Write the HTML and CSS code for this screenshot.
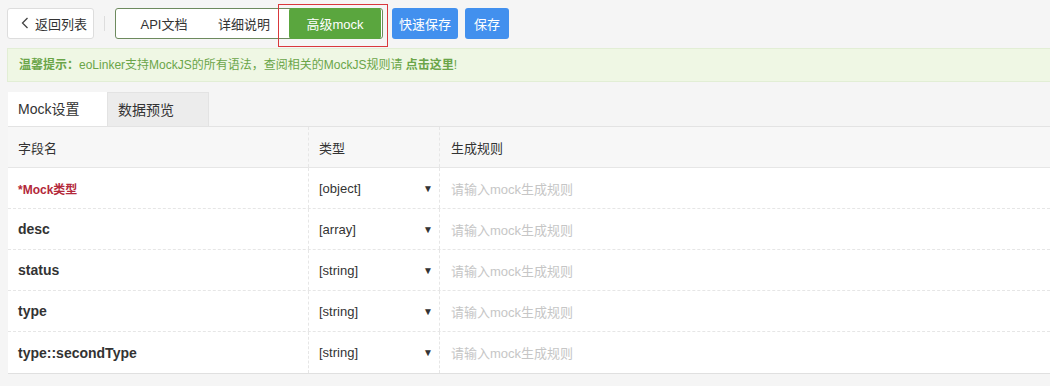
FILE: index.html
```html
<!DOCTYPE html>
<html lang="zh-CN">
<head>
    <meta charset="UTF-8">
    <title>高级mock</title>
    <link rel="stylesheet" href="styles.css">
</head>
<body>
    <div class="toolbar">
        <button class="back-btn">
            <svg width="8" height="12" viewBox="0 0 8 12"><path d="M6.5 1 L1.5 6 L6.5 11" fill="none" stroke="#444" stroke-width="1.3"/></svg>
            返回列表
        </button>
        <span class="sep"></span>
        <div class="tab-group">
            <button class="tab-item first">API文档</button>
            <button class="tab-item second">详细说明</button>
            <button class="tab-item active">高级mock</button>
        </div>
        <button class="blue-btn">快速保存</button>
        <button class="blue-btn">保存</button>
        <span class="mark"></span>
    </div>

    <div class="notice">
        <b>温馨提示：</b>eoLinker支持MockJS的所有语法，查阅相关的MockJS规则请 <b>点击这里</b>!
    </div>

    <div class="panel-tabs">
        <div class="ptab current">Mock设置</div>
        <div class="ptab">数据预览</div>
    </div>

    <div class="mock-table">
        <div class="row head">
            <div class="cell c-name">字段名</div>
            <div class="cell c-type">类型</div>
            <div class="cell c-rule">生成规则</div>
        </div>
        <div class="row">
            <div class="cell c-name required">*Mock类型</div>
            <div class="cell c-type"><span>[object]</span><i>&#9660;</i></div>
            <div class="cell c-rule">请输入mock生成规则</div>
        </div>
        <div class="row">
            <div class="cell c-name">desc</div>
            <div class="cell c-type"><span>[array]</span><i>&#9660;</i></div>
            <div class="cell c-rule">请输入mock生成规则</div>
        </div>
        <div class="row">
            <div class="cell c-name">status</div>
            <div class="cell c-type"><span>[string]</span><i>&#9660;</i></div>
            <div class="cell c-rule">请输入mock生成规则</div>
        </div>
        <div class="row">
            <div class="cell c-name">type</div>
            <div class="cell c-type"><span>[string]</span><i>&#9660;</i></div>
            <div class="cell c-rule">请输入mock生成规则</div>
        </div>
        <div class="row last">
            <div class="cell c-name">type::secondType</div>
            <div class="cell c-type"><span>[string]</span><i>&#9660;</i></div>
            <div class="cell c-rule">请输入mock生成规则</div>
        </div>
    </div>
</body>
</html>
```

FILE: styles.css
```css
body {
    margin: 0;
    padding: 0 0 0 7px;
    background-color: #f5f5f5;
    font-family: "Liberation Sans", "Noto Sans CJK SC", sans-serif;
    font-size: 13px;
    color: #333;
}

button {
    font-family: inherit;
    font-size: 13px;
    cursor: pointer;
}

.toolbar {
    position: relative;
    display: flex;
    align-items: center;
    height: 46px;
}

.back-btn {
    display: flex;
    align-items: center;
    gap: 6px;
    width: 87px;
    height: 31px;
    padding: 0 0 0 13px;
    background-color: white;
    border: 1px solid #ddd;
    border-radius: 3px;
    color: #333;
}

.sep {
    width: 1px;
    height: 15px;
    background-color: #ddd;
    margin: 0 10px;
}

.tab-group {
    display: flex;
    height: 31px;
    box-sizing: border-box;
    border: 1px solid #6d8a5e;
    border-radius: 3px;
    background-color: white;
    padding-right: 1px;
    margin-right: 9px;
}

.tab-item {
    border: none;
    background: none;
    color: #333;
    padding: 0;
    height: 29px;
}

.tab-item.first {
    width: 96px;
}

.tab-item.second {
    width: 64px;
}

.tab-item.active {
    width: 92px;
    height: 31px;
    margin: -1px 0 -1px 13px;
    background-color: #5aa63e;
    color: white;
    border-radius: 3px;
}

.blue-btn {
    height: 31px;
    padding: 0 7px;
    margin-right: 7px;
    background-color: #4290ee;
    color: white;
    border: none;
    border-radius: 3px;
}

.blue-btn:last-of-type {
    padding: 0 9px;
}

/* red annotation frame drawn over the active tab */
.mark {
    position: absolute;
    left: 271px;
    top: 4px;
    width: 108px;
    height: 41px;
    border: 1px solid #d9383c;
}

.notice {
    margin-top: 2px;
    height: 32px;
    line-height: 32px;
    padding-left: 11px;
    background-color: #eff7e4;
    border: 1px solid #e2eed5;
    border-right: none;
    color: #6aa548;
    font-size: 12px;
}

.panel-tabs {
    display: flex;
    margin-top: 10px;
    padding-left: 1px;
}

.ptab {
    height: 34px;
    line-height: 34px;
    padding-left: 10px;
    box-sizing: border-box;
    font-size: 14px;
    color: #333;
}

.ptab.current {
    background-color: white;
    width: 99px;
}

.ptab:not(.current) {
    background-color: #ececec;
    border: 1px solid #e3e3e3;
    border-bottom: none;
    width: 102px;
}

.mock-table {
    margin-left: 1px;
    background-color: white;
    border-top: 1px solid #e3e3e3;
    border-bottom: 1px solid #e0e0e0;
}

.row {
    display: flex;
    height: 41px;
    border-bottom: 1px dashed #e6e6e6;
    box-sizing: border-box;
}

.row.last {
    border-bottom: none;
}

.row.head {
    background-color: #f7f7f7;
    border-bottom: 1px solid #e6e6e6;
}

.cell {
    display: flex;
    align-items: center;
    box-sizing: border-box;
    padding-left: 10px;
}

.c-name {
    width: 300px;
    font-weight: bold;
    font-size: 14px;
}

.head .cell {
    font-weight: normal;
    font-size: 13px;
    color: #333;
}

.required {
    color: #b3283a;
    font-size: 12px;
}

.c-type {
    width: 131px;
    border-left: 1px dashed #e6e6e6;
    justify-content: space-between;
    padding-right: 6px;
    font-size: 13px;
}

.c-type i {
    font-style: normal;
    font-size: 10px;
    color: #333;
}

.c-rule {
    flex: 1;
    border-left: 1px dashed #e6e6e6;
    color: #c6c6c6;
    padding-left: 11px;
}
```
